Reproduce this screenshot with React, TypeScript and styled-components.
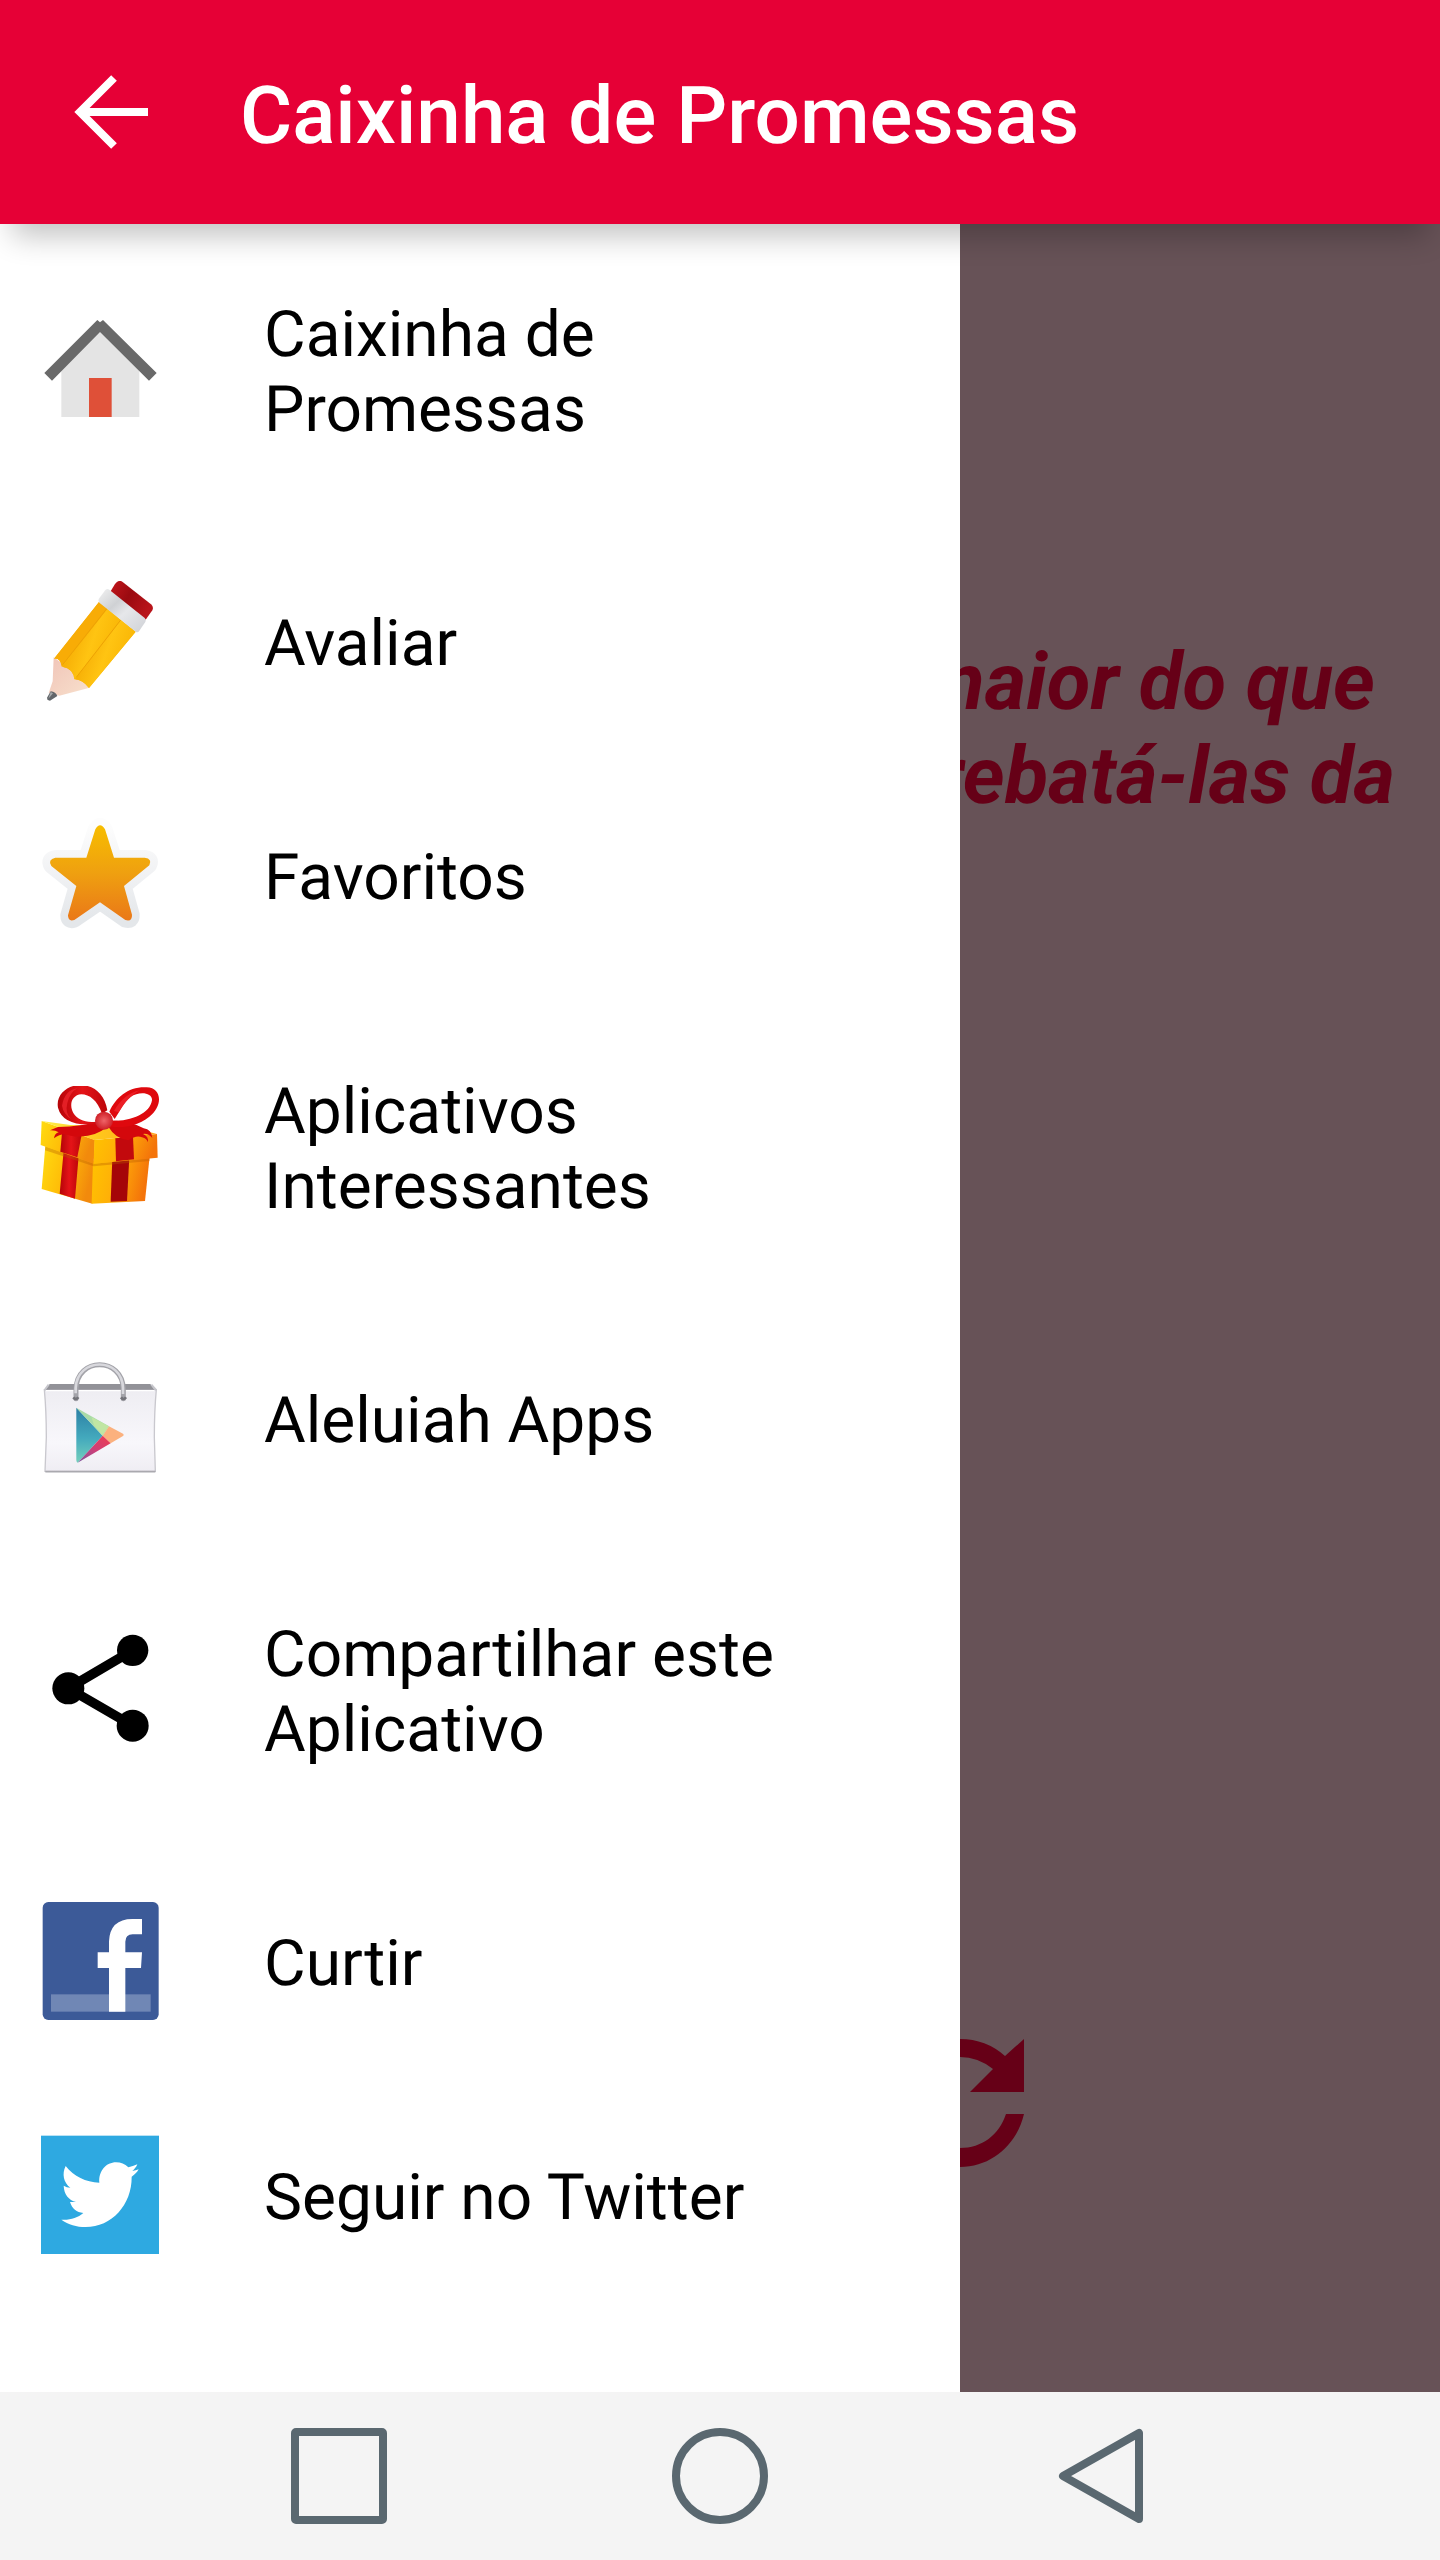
import React from "react";
import styled, { createGlobalStyle } from "styled-components";

const GlobalStyle = createGlobalStyle`
  * { box-sizing: border-box; }
  body {
    margin: 0;
    background: #fff;
    font-family: Roboto, "Liberation Sans", sans-serif;
    text-rendering: geometricPrecision;
  }
`;

const Screen = styled.div`
  display: flex;
  flex-direction: column;
  min-height: 100vh;
`;

const IconButton = styled.button`
  display: flex;
  padding: 0;
  border: 0;
  background: none;
  color: inherit;
  cursor: pointer;
`;

const AppBar = styled.header`
  position: relative;
  z-index: 1;
  display: flex;
  align-items: center;
  gap: 80px;
  height: 224px;
  padding: 0 64px;
  background: #e60036;
  color: #fff;
  box-shadow: 0 24px 28px -12px rgba(0, 0, 0, 0.24);
`;

const Title = styled.h1`
  margin: 0;
  padding-top: 8px;
  font-size: 80px;
  font-weight: 500;
  line-height: 94px;
`;

const Body = styled.div`
  flex: 1;
  display: grid;
  grid-template-columns: 2fr 1fr;
`;

const Drawer = styled.nav`
  background: #fff;
`;

const Menu = styled.ul`
  display: flex;
  flex-direction: column;
  gap: 19px;
  margin: 0;
  padding: 0;
  list-style: none;
`;

const MenuLink = styled.a`
  display: flex;
  align-items: center;
  gap: 104px;
  padding: 0 120px 0 40px;
  color: #000;
  text-decoration: none;
`;

const MenuIcon = styled.svg`
  flex: none;
  width: 120px;
  height: 120px;
`;

const Label = styled.span`
  padding: 73px 0 67px;
  font-size: 64px;
  line-height: 75px;
`;

const Scrim = styled.main`
  display: flex;
  flex-direction: column;
  min-width: 0;
  overflow: hidden;
  padding-top: 411px;
  background: #675257;
  color: #660017;
`;

const Verse = styled.p`
  display: flex;
  flex-direction: column;
  align-items: flex-end;
  margin: 0;
  font-size: 80px;
  font-style: italic;
  font-weight: 700;
  line-height: 94px;
  white-space: nowrap;
`;

const VerseLine = styled.span<{ $end: number }>`
  padding-right: ${(p) => p.$end}px;
`;

const RefreshButton = styled(IconButton)`
  align-self: flex-start;
  margin: 1216px 0 0 -64px;
`;

const SystemBar = styled.footer`
  display: flex;
  align-items: center;
  justify-content: center;
  gap: 285px;
  height: 168px;
  background: #f4f4f4;
  color: #5a6870;
`;

const House = () => (
  <>
    <path d="M240 122 358 240V380H124V240Z" fill="#e4e4e4" />
    <rect x="207" y="263" width="68" height="117" fill="#df5038" />
    <path d="m73 248 159-159 8 7 9-7 161 159-23 23-147-146L96 271Z" fill="#696969" />
  </>
);

const Pencil = () => (
  <>
    <defs>
      <linearGradient id="wood" x1="0" x2="1" y1="0" y2="1">
        <stop offset="0" stopColor="#f0c4b8" />
        <stop offset="1" stopColor="#f8e0cc" />
      </linearGradient>
      <linearGradient id="eraser" x1="0" x2="1" y1="0" y2="0.5">
        <stop offset="0" stopColor="#c4161c" />
        <stop offset="0.5" stopColor="#9a0a10" />
        <stop offset="1" stopColor="#b8141a" />
      </linearGradient>
      <linearGradient id="ferrule" x1="0" x2="1" y1="0" y2="1">
        <stop offset="0" stopColor="#f2f2f2" />
        <stop offset="0.35" stopColor="#cfd1d4" />
        <stop offset="0.55" stopColor="#e6e7ea" />
        <stop offset="1" stopColor="#cfd1d6" />
      </linearGradient>
      <linearGradient id="strip" x1="0" x2="1" y1="0.3" y2="0.7">
        <stop offset="0" stopColor="#f2a400" />
        <stop offset="0.5" stopColor="#ffc412" />
        <stop offset="1" stopColor="#f7b000" />
      </linearGradient>
    </defs>
    <path d="m101 290-3 72-12 35 32 8 88-23-14-36-54-30Z" fill="url(#wood)" />
    <path d="m92 392-10 18q-3 10 8 10l22-14q-4-12-20-14Z" fill="#62666a" />
    <path d="m92 394-7 20 14-16Z" fill="#a5a8aa" />
    <path d="M237 124 347 213 207 382q-18-24-44-26-2-32-36-38-4-26-25-24Z" fill="#fcb806" />
    <path d="m237 124 26 20-138 174q-4-26-23-24Z" fill="#f8ac06" />
    <path d="m263 144 40 34-140 178q-2-32-36-38Z" fill="url(#strip)" />
    <path d="m303 178 44 35-140 169q-18-24-40-26Z" fill="url(#strip)" />
    <path d="M261 143 128 312M302 178 169 350" stroke="#eda205" strokeWidth="3" />
    <path d="M285 70q10-14 22-7l86 68q9 8 4 18l-20 28-106-84Z" fill="url(#eraser)" />
    <path d="M256 88q6-5 12-1l106 85q6 5 2 12l-19 28q-4 5-10 1l-108-86q-6-5-3-12Z" fill="url(#ferrule)" />
  </>
);

const starPath =
  "M226 86Q240 62 255 86L282 171H374Q398 174 388 194L312 256 336 342Q337 364 316 358L240 305 163 358Q144 364 144 344L169 256 94 196Q82 176 106 171H199Z";

const Star = () => (
  <>
    <defs>
      <linearGradient id="star" x1="0" x2="0" y1="0" y2="1">
        <stop offset="0" stopColor="#f7bd00" />
        <stop offset="0.5" stopColor="#efa010" />
        <stop offset="1" stopColor="#ea7818" />
      </linearGradient>
      <linearGradient id="rim" x1="0" x2="0" y1="0" y2="1">
        <stop offset="0" stopColor="#fdfdfd" />
        <stop offset="0.5" stopColor="#f1f2f4" />
        <stop offset="1" stopColor="#e4e7ea" />
      </linearGradient>
    </defs>
    <path d={starPath} fill="url(#rim)" stroke="url(#rim)" strokeWidth="46" strokeLinejoin="round" />
    <path d={starPath} fill="url(#star)" />
  </>
);

const Gift = () => (
  <>
    <defs>
      <linearGradient id="giftLeft" x1="0" x2="1" y1="0" y2="0.3">
        <stop offset="0" stopColor="#ffdc10" />
        <stop offset="0.5" stopColor="#ffbd08" />
        <stop offset="1" stopColor="#f28a0c" />
      </linearGradient>
      <linearGradient id="giftRight" x1="0" x2="1" y1="0" y2="0.2">
        <stop offset="0" stopColor="#ffc400" />
        <stop offset="0.5" stopColor="#ffae08" />
        <stop offset="1" stopColor="#f4740a" />
      </linearGradient>
      <linearGradient id="lid" x1="0" x2="1" y1="0" y2="0">
        <stop offset="0" stopColor="#fff04a" />
        <stop offset="0.5" stopColor="#ffc61c" />
        <stop offset="1" stopColor="#ffa816" />
      </linearGradient>
      <linearGradient id="ribbon" x1="0" x2="1" y1="0" y2="0">
        <stop offset="0" stopColor="#b50408" />
        <stop offset="0.5" stopColor="#e51418" />
        <stop offset="1" stopColor="#bd060a" />
      </linearGradient>
      <radialGradient id="knot">
        <stop offset="0" stopColor="#ef6468" />
        <stop offset="1" stopColor="#cf2028" />
      </radialGradient>
    </defs>
    <path d="m76 242 149 46-8 128-152-44Z" fill="url(#giftLeft)" />
    <path d="m219 288 170-14-14 134-160 8Z" fill="url(#giftRight)" />
    <path d="m131 258 45 14-11 129-46-15Z" fill="url(#ribbon)" />
    <path d="m277 280 51-4-7 132-49 2Z" fill="#a50508" />
    <path d="m76 244 146 52 167-16v8l-168 16-146-48Z" fill="#b85a00" opacity=".35" />
    <path d="m65 168 160 57-4 71-159-56Z" fill="url(#giftLeft)" />
    <path d="m223 225 188-18 2 71-192 18Z" fill="url(#giftRight)" />
    <path d="m65 168 158 57 188-18-90-23-170-4Z" fill="url(#lid)" />
    <path d="m127 192 58 17-13 68-51-17Z" fill="url(#ribbon)" />
    <path d="m286 220 53-5 3 68-54 6Z" fill="#c2090d" />
    <path d="M252 166q-70 20-138 20l-24 10q15-1 26 6-12 3-14 18 26-20 50-8 64 12 112-28 24 40 62 42 22-16 40-9 16 4 17 15 5-17-14-25 14-3 28 12-2-25-26-29-47-25-119-24Z" fill="#d4080c" />
    <path d="M236 176Q130 188 114 128C106 86 148 58 184 60c40 2 70 28 78 76l-16 10C232 106 208 88 184 88c-28 2-38 30-24 56 12 20 36 30 68 26Z" fill="url(#ribbon)" />
    <path d="M268 140C288 96 326 64 380 67c48 2 48 58 8 88-38 30-80 34-116 30l-2-17c62 2 120-22 126-62 2-24-40-28-64-10-20 16-32 42-48 66Z" fill="#df090e" />
    <path d="M126 122q8-46 46-52-22 12-30 44t12 48q-24-14-28-40ZM282 138q28-50 76-62-38 22-62 66Z" fill="#f12a30" opacity=".7" />
    <circle cx="252" cy="167" r="27" fill="url(#knot)" />
  </>
);

const PlayBag = () => (
  <>
    <defs>
      <linearGradient id="bag" x1="0" x2="0" y1="0" y2="1">
        <stop offset="0" stopColor="#eeedf2" />
        <stop offset="0.65" stopColor="#f8f7fb" />
        <stop offset="1" stopColor="#efedf3" />
      </linearGradient>
      <linearGradient id="teal" x1="0" x2="0" y1="0" y2="1">
        <stop offset="0" stopColor="#2c7fa4" />
        <stop offset="0.55" stopColor="#43a9bd" />
        <stop offset="1" stopColor="#74cfbc" />
      </linearGradient>
      <linearGradient id="pink" x1="1" x2="0" y1="0" y2="1">
        <stop offset="0" stopColor="#ee3c50" />
        <stop offset="0.5" stopColor="#cf3f77" />
        <stop offset="1" stopColor="#7956a0" />
      </linearGradient>
    </defs>
    <path d="M73 147H409Q403 210 403 290L406 392H75L79 290Q79 210 73 147Z" fill="url(#bag)" stroke="#c9c8ce" strokeWidth="4" />
    <path d="M89 130H391L404 147H76Z" fill="#929298" />
    <path d="M86 132 74 148M394 132l14 16" stroke="#c5c5cb" strokeWidth="6" />
    <path d="M76 393H406" stroke="#aaa9af" strokeWidth="5" />
    <path d="M78 150H403" stroke="#fff" strokeWidth="4" />
    <path d="M168 174V146C170 48 308 48 310 146v28" fill="none" stroke="#a3a3a9" strokeWidth="15" strokeLinecap="round" />
    <path d="M167 158v-16C172 48 306 48 309 142v18" fill="none" stroke="#d8d8dd" strokeWidth="8" />
    <path d="M160 170q8 10 15 0M303 170q8 10 15 0" fill="none" stroke="#737379" strokeWidth="8" />
    <path d="M169 201 248 285 173 366q-4-2-4-8Z" fill="url(#teal)" />
    <path d="M169 201 267 257 248 285Z" fill="#a9dba7" />
    <path d="m215 230 52 27-19 28-26-31Z" fill="#c1e6a3" />
    <path d="m267 257 42 22q5 4 0 7l-37 22-24-23Z" fill="#fbb17e" />
    <path d="m248 285 24 23-99 58Z" fill="url(#pink)" />
  </>
);

const Share = () => (
  <>
    <path d="M338 121 145 235l193 112" fill="none" stroke="#000" strokeWidth="29" />
    <circle cx="338" cy="121" r="47" />
    <circle cx="145" cy="235" r="48" />
    <circle cx="338" cy="347" r="48" />
  </>
);

const Facebook = () => (
  <>
    <rect x="68" y="65" width="348" height="354" rx="17" fill="#3c5a98" />
    <rect x="93" y="342" width="299" height="52" fill="#7087b5" />
    <path d="M267 394V263H233V216H267V183Q270 116 337 116H366V162H338Q316 163 316 184V216H366L363 263H316V394Z" fill="#fff" />
  </>
);

const Twitter = () => (
  <>
    <rect x="63" y="76" width="354" height="355" fill="#2ea9e1" />
    <path
      d="M137 167c25 32 60 48 101 50-3-35 21-61 50-61 15 0 26 5 37 15 9-2 18-5 27-9-3 8-8 14-15 20 7-1 13-3 19-5-5 9-12 16-21 22 1 84-60 151-138 151-27 0-52-7-73-22 25 2 49-5 66-20-20-2-34-13-40-33h18c-22-6-36-23-37-49q9 6 20 6c-20-15-26-41-14-65Z"
      fill="#fff"
    />
  </>
);

const items = [
  { label: "Caixinha de Promessas", top: 56, Art: House },
  { label: "Avaliar", top: 61, Art: Pencil },
  { label: "Favoritos", top: 43, Art: Star },
  { label: "Aplicativos Interessantes", top: 63, Art: Gift },
  { label: "Aleluiah Apps", top: 52, Art: PlayBag },
  { label: "Compartilhar este Aplicativo", top: 57, Art: Share },
  { label: "Curtir", top: 62, Art: Facebook },
  { label: "Seguir no Twitter", top: 74, Art: Twitter },
];

export default function App() {
  return (
    <>
      <GlobalStyle />
      <Screen>
        <AppBar>
          <IconButton type="button" aria-label="Voltar">
            <svg width="96" height="96" viewBox="0 0 96 96" fill="none" stroke="currentColor" strokeWidth="8" aria-hidden="true">
              <path d="M50 14 16 48l34 34M16 48h68" />
            </svg>
          </IconButton>
          <Title>Caixinha de Promessas</Title>
        </AppBar>
        <Body>
          <Drawer>
            <Menu>
              {items.map(({ label, top, Art }) => (
                <li key={label}>
                  <MenuLink href="#">
                    <MenuIcon viewBox={`60 ${top} 360 360`} aria-hidden="true">
                      <Art />
                    </MenuIcon>
                    <Label>{label}</Label>
                  </MenuLink>
                </li>
              ))}
            </Menu>
          </Drawer>
          <Scrim>
            <Verse>
              <VerseLine $end={65}>maior do que</VerseLine>
              <VerseLine $end={45}>rebatá-las da</VerseLine>
            </Verse>
            <RefreshButton type="button" aria-label="Atualizar">
              <svg width="128" height="128" viewBox="0 0 128 128" aria-hidden="true">
                <path d="M64 0q26 0 45 17L128 0v53H74l23-23Q82 18 64 18C42 18 25 32 19 53H0C7 22 32 0 64 0Z" fill="currentColor" />
                <path d="M0 75h19c6 20 23 34 45 34s39-13 46-34h18c-7 30-32 53-64 53S7 105 0 75Z" fill="currentColor" />
              </svg>
            </RefreshButton>
          </Scrim>
        </Body>
        <SystemBar>
          <IconButton type="button" aria-label="Recentes">
            <svg width="96" height="96" viewBox="0 0 96 96" fill="none" stroke="currentColor" strokeWidth="8" aria-hidden="true">
              <rect x="4" y="4" width="88" height="88" rx="1" />
            </svg>
          </IconButton>
          <IconButton type="button" aria-label="Início">
            <svg width="96" height="96" viewBox="0 0 96 96" fill="none" stroke="currentColor" strokeWidth="8" aria-hidden="true">
              <circle cx="48" cy="48" r="44" />
            </svg>
          </IconButton>
          <IconButton type="button" aria-label="Voltar">
            <svg width="96" height="96" viewBox="0 0 96 96" fill="none" stroke="currentColor" strokeWidth="8" strokeLinejoin="round" aria-hidden="true">
              <path d="M86 5v86L10 48Z" />
            </svg>
          </IconButton>
        </SystemBar>
      </Screen>
    </>
  );
}
